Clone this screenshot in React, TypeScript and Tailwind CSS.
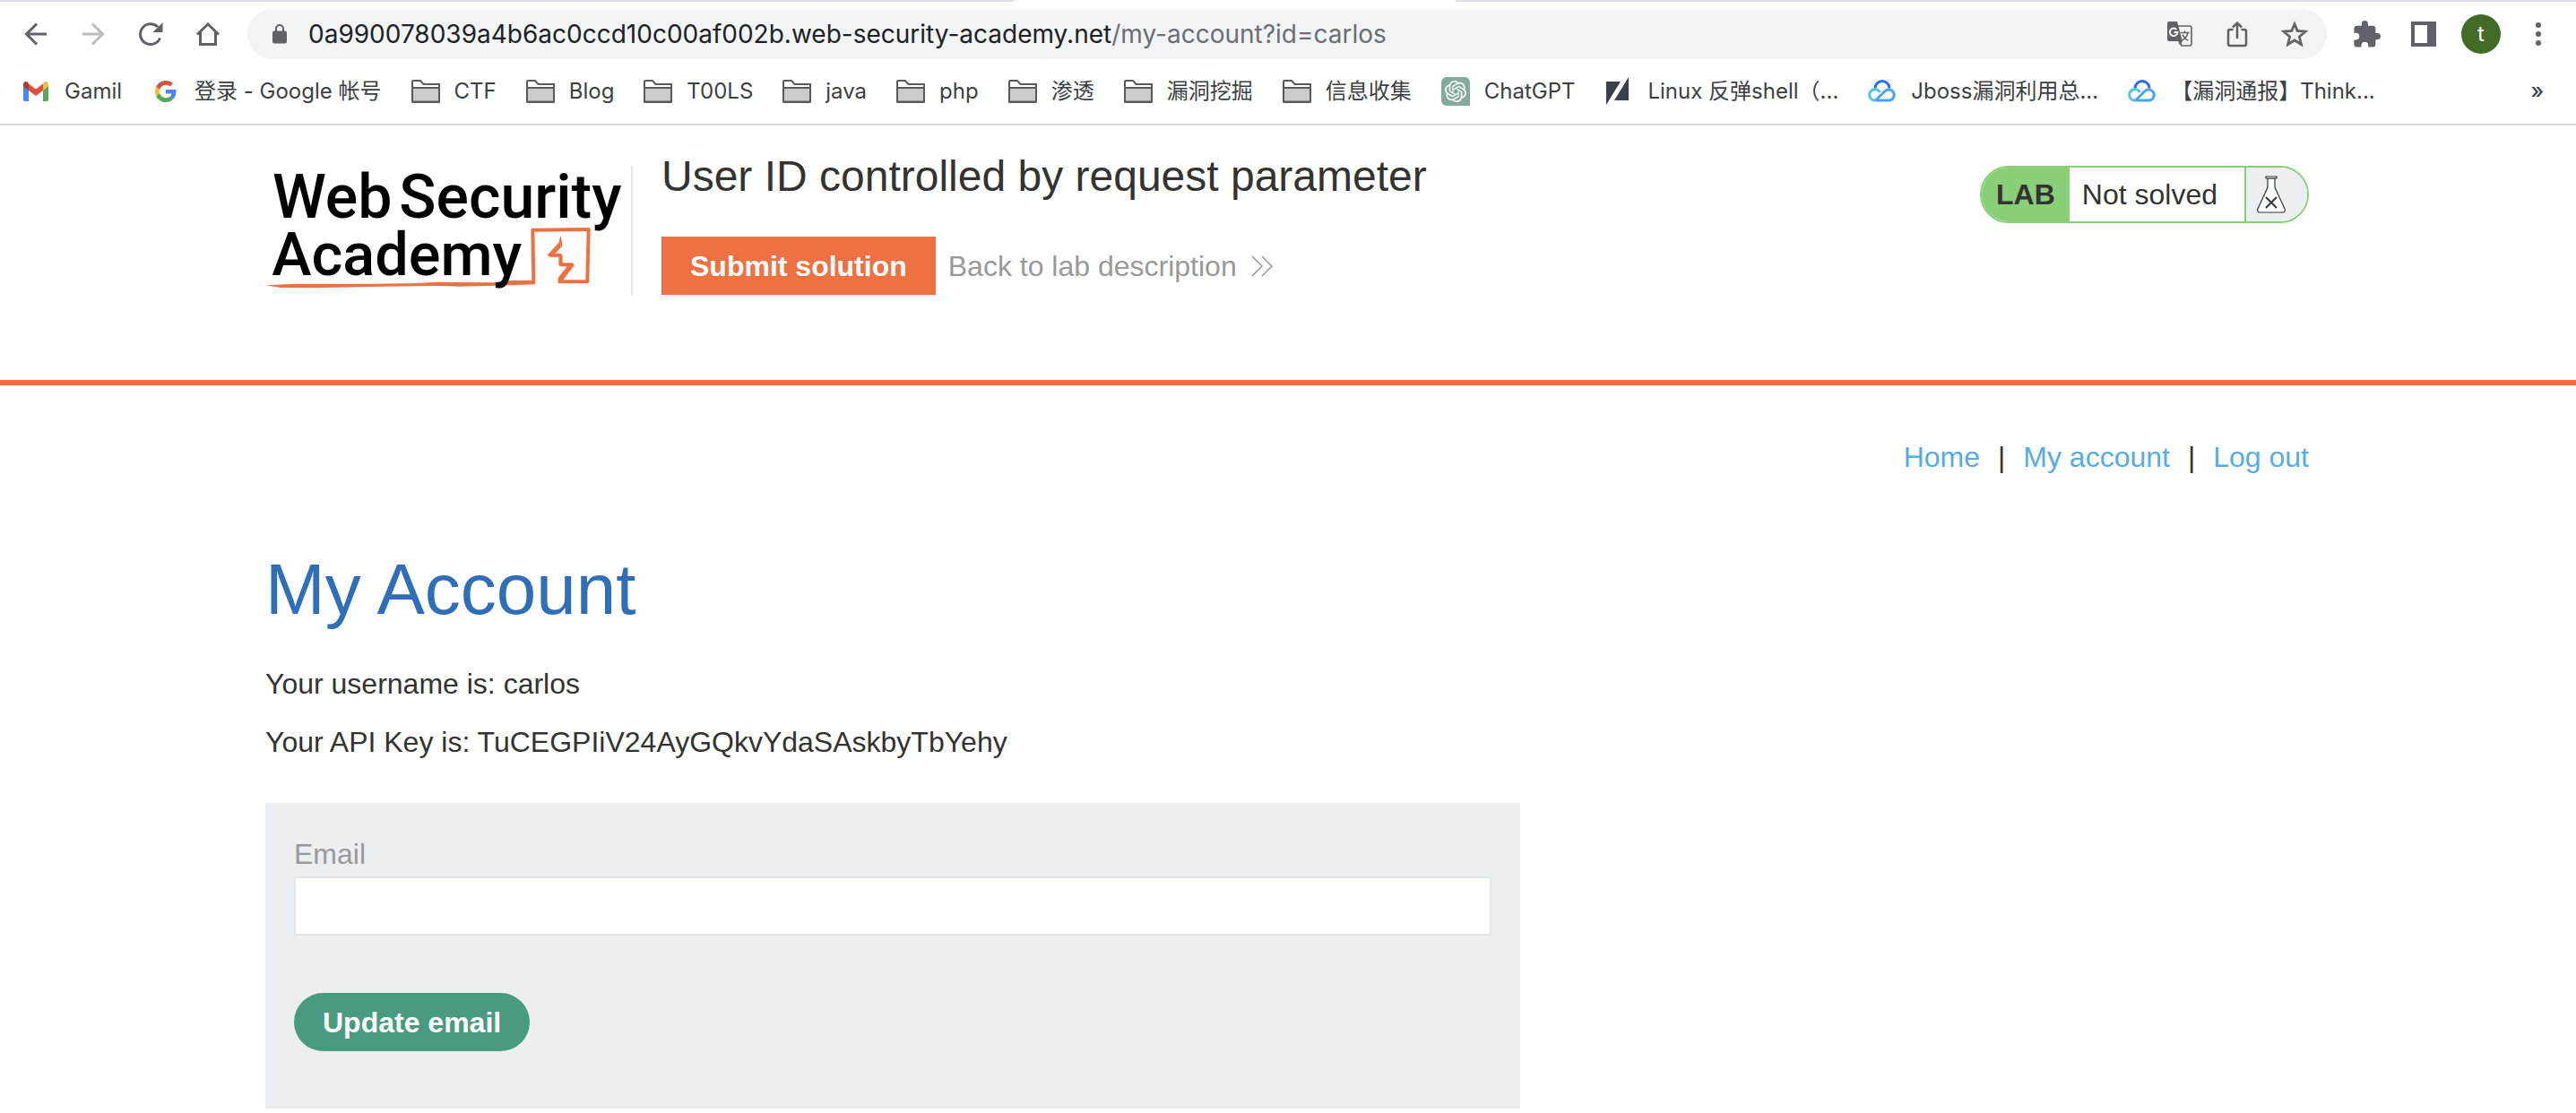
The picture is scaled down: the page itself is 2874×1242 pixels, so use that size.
import type { ReactNode } from "react";
import { SiOpenai } from "react-icons/si";

const uiFont = "font-['Inter','Noto_Sans_CJK_SC',sans-serif]";

function BackIcon() {
  return (
    <svg viewBox="0 0 26 26" className="size-[26px]" fill="none" stroke="currentColor" strokeWidth="3">
      <path d="M25 13H3M14 1.5 2.5 13 14 24.5" />
    </svg>
  );
}

function ForwardIcon() {
  return (
    <svg viewBox="0 0 26 26" className="size-[26px]" fill="none" stroke="currentColor" strokeWidth="3">
      <path d="M1 13h22M12 1.5 23.5 13 12 24.5" />
    </svg>
  );
}

function ReloadIcon() {
  return (
    <svg viewBox="0 0 28 28" className="size-7">
      <path d="M24.5 18.5A11.4 11.4 0 1 1 22 6" fill="none" stroke="currentColor" strokeWidth="3" />
      <path d="M27.500 1v11h-11z" fill="currentColor" />
    </svg>
  );
}

function HomeIcon() {
  return (
    <svg viewBox="0 0 28 28" className="size-7" fill="none" stroke="currentColor" strokeWidth="3">
      <path d="M2 14.500 14 3l12 11.500M5.500 12v13.500h17V12" />
    </svg>
  );
}

function LockIcon() {
  return (
    <svg viewBox="0 0 16 22" className="h-[22px] w-4 text-[#5f6368]">
      <rect x="0" y="7.500" width="16" height="14" rx="2" fill="currentColor" />
      <path d="M4 9V5a4 4 0 0 1 8 0v4" fill="none" stroke="currentColor" strokeWidth="2" />
    </svg>
  );
}

function TranslateIcon() {
  return (
    <svg viewBox="0 0 28 28" className="size-7">
      <path d="M11 5h14a2 2 0 0 1 2 2v18a2 2 0 0 1-2 2H16l-3-5" fill="none" stroke="#5f6368" strokeWidth="1.600" />
      <path d="M2 0h9l6 22H2a2 2 0 0 1-2-2V2a2 2 0 0 1 2-2z" fill="#5f6368" />
      <path d="M12.500 22H17l-3 4.500z" fill="#5f6368" />
      <path d="M10.300 8.800A4.300 4.300 0 1 0 11.500 12H7.500" fill="none" stroke="#fff" strokeWidth="1.900" />
      <path d="M15 12.500h9.500M19.500 10.500v2M23 12.500c-1 4-3.500 7-6.500 8.500M17 14.500c1 2.500 3.500 5 6.500 7" fill="none" stroke="#5f6368" strokeWidth="1.500" />
    </svg>
  );
}

function ShareIcon() {
  return (
    <svg viewBox="0 0 24 30" className="h-[30px] w-6" fill="none" stroke="currentColor" strokeWidth="2.500">
      <path d="M7.500 10H4a2 2 0 0 0-2 2v14a2 2 0 0 0 2 2h16a2 2 0 0 0 2-2V12a2 2 0 0 0-2-2h-3.500" />
      <path d="M12 20V3M7 7.500l5-5 5 5" />
    </svg>
  );
}

function StarIcon() {
  return (
    <svg viewBox="1 1 28 28" className="size-[30px]" fill="none" stroke="currentColor" strokeWidth="2.600">
      <path d="m15 4.500 3 7.200 8.300.7-6.300 5.400 1.900 7.900-6.900-4.200-6.900 4.200 1.900-7.900-6.300-5.400 8.300-.7z" />
    </svg>
  );
}

function PuzzleIcon() {
  return (
    <svg viewBox="1 1 22 22" className="size-[31px]" fill="currentColor">
      <path d="M20.500 11H19V7c0-1.100-.9-2-2-2h-4V3.500a2.500 2.500 0 0 0-5 0V5H4c-1.100 0-2 .9-2 2v3.800h1.500a2.700 2.700 0 0 1 0 5.400H2V20c0 1.100.9 2 2 2h3.800v-1.500a2.700 2.700 0 0 1 5.400 0V22H17c1.100 0 2-.9 2-2v-4h1.500a2.500 2.500 0 0 0 0-5z" />
    </svg>
  );
}

function SidePanelIcon() {
  return (
    <svg viewBox="0 0 28 28" className="size-7" fill="currentColor">
      <path fillRule="evenodd" d="M0 0h28v28H0zM4 4v20h14V4z" />
    </svg>
  );
}

function DotsIcon() {
  return (
    <svg viewBox="0 0 6 26" className="h-[26px] w-1.5" fill="currentColor">
      <circle cx="3" cy="3" r="3" />
      <circle cx="3" cy="13" r="3" />
      <circle cx="3" cy="23" r="3" />
    </svg>
  );
}

function GmailIcon() {
  return (
    <svg viewBox="0 0 32 32" className="size-8">
      <path d="M2 9v15.500A2 2 0 0 0 4 27h4V14z" fill="#4f86ec" />
      <path d="M30 9v15.500a2 2 0 0 1-2 2.500h-4V14z" fill="#58a55c" />
      <path d="M24 7.500V15l6-4.500V8c0-3-3.300-3.700-5-2.200z" fill="#f1bd42" />
      <path d="M8 7.500 16 13.500l8-6V15l-8 6-8-6z" fill="#d85140" />
      <path d="M2 8c0-3 3.300-3.700 5-2.200l1 1.700V15l-6-4.500z" fill="#b63a2c" />
    </svg>
  );
}

function GoogleIcon() {
  return (
    <svg viewBox="-8 -8 64 64" className="size-8">
      <path fill="#58a55c" d="M24 48c6.480 0 11.930-2.130 15.890-5.810l-7.730-6c-2.150 1.450-4.920 2.300-8.160 2.300-6.260 0-11.570-4.220-13.470-9.910H2.560v6.190C6.510 42.620 14.620 48 24 48z" />
      <path fill="#f1bd42" d="M10.530 28.590A14.500 14.500 0 0 1 9.770 24c0-1.600.27-3.140.76-4.590v-6.190H2.560A23.900 23.900 0 0 0 0 24c0 3.880.92 7.540 2.560 10.780z" />
      <path fill="#d85140" d="M24 9.500c3.540 0 6.710 1.220 9.210 3.600l6.850-6.850C35.900 2.380 30.470 0 24 0 14.620 0 6.510 5.380 2.560 13.220l7.970 6.190C12.430 13.720 17.740 9.500 24 9.500z" />
      <path fill="#5383ec" d="M46.980 24.550c0-1.570-.15-3.090-.38-4.550H24v9.020h12.940a11.100 11.100 0 0 1-4.780 7.170l7.730 6c4.510-4.180 7.090-10.360 7.090-17.640z" />
    </svg>
  );
}

function FolderIcon() {
  return (
    <svg viewBox="0 0 32 26" className="h-[26px] w-8">
      <path d="M1 24V2a1 1 0 0 1 1-1h8l3.500 4H31v19a1 1 0 0 1-1 1H2a1 1 0 0 1-1-1z" fill="#fff" stroke="#5a5a5a" strokeWidth="2" />
      <path d="M1 9h30v15.500H1z" fill="#cbcbcb" stroke="#5a5a5a" strokeWidth="2" />
    </svg>
  );
}

function ChatGptIcon() {
  return (
    <span className="flex size-8 items-center justify-center rounded-md rounded-br-none bg-[#83a99a] text-white">
      <SiOpenai className="size-6" />
    </span>
  );
}

function SlashIcon() {
  return (
    <svg viewBox="0 0 32 32" className="size-8" fill="#3b3f4d">
      <path d="M2 5h16L2 31z" />
      <path d="M27 0v26H11z" />
    </svg>
  );
}

function CloudIcon() {
  return (
    <svg viewBox="0 0 32 32" className="size-8" fill="none" strokeWidth="3">
      <path d="M8 12.500a8 8 0 0 1 16 0" stroke="#2f6bf6" />
      <path d="M13.500 17a6.200 6.200 0 1 0-5 9" stroke="#55c3dc" />
      <path d="M8.500 26 19 15.800a6 6 0 1 1 4.500 10.200H8.500" stroke="#4aa3f8" />
    </svg>
  );
}

const bookmarks: { label: string; icon: ReactNode }[] = [
  { label: "Gamil", icon: <GmailIcon /> },
  { label: "登录 - Google 帐号", icon: <GoogleIcon /> },
  { label: "CTF", icon: <FolderIcon /> },
  { label: "Blog", icon: <FolderIcon /> },
  { label: "T00LS", icon: <FolderIcon /> },
  { label: "java", icon: <FolderIcon /> },
  { label: "php", icon: <FolderIcon /> },
  { label: "渗透", icon: <FolderIcon /> },
  { label: "漏洞挖掘", icon: <FolderIcon /> },
  { label: "信息收集", icon: <FolderIcon /> },
  { label: "ChatGPT", icon: <ChatGptIcon /> },
  { label: "Linux 反弹shell（...", icon: <SlashIcon /> },
  { label: "Jboss漏洞利用总...", icon: <CloudIcon /> },
  { label: "【漏洞通报】Think...", icon: <CloudIcon /> },
];

function ToolButton({ label, className = "", children }: { label: string; className?: string; children: ReactNode }) {
  return (
    <button type="button" aria-label={label} className={`flex h-14 w-16 items-center justify-center ${className}`}>
      {children}
    </button>
  );
}

function BrowserChrome() {
  return (
    <header className={`border-b-2 border-[#d9d9dc] bg-white text-[#3c4043] ${uiFont}`}>
      <div className="flex h-0.5 justify-between">
        <span className="w-[1132px] rounded-br-sm bg-[#e0dfe5]" />
        <span className="w-[1250px] rounded-bl-sm bg-[#e0dfe5]" />
      </div>
      <div className="flex items-center py-2 pl-2 pr-2.5 text-[#5f6368]">
        <ToolButton label="Back"><BackIcon /></ToolButton>
        <ToolButton label="Forward" className="text-[#babcbe]"><ForwardIcon /></ToolButton>
        <ToolButton label="Reload"><ReloadIcon /></ToolButton>
        <ToolButton label="Home"><HomeIcon /></ToolButton>
        <div className="ml-3 flex h-14 flex-1 items-center rounded-full bg-[#f1f3f4] pl-7 pr-1">
          <LockIcon />
          <p className="ml-6 flex-1 whitespace-nowrap text-[28px] leading-10 text-[#202124]">
            0a990078039a4b6ac0ccd10c00af002b.web-security-academy.net
            <span className="text-[#6b6e72]">/my-account?id=carlos</span>
          </p>
          <ToolButton label="Translate"><TranslateIcon /></ToolButton>
          <ToolButton label="Share"><ShareIcon /></ToolButton>
          <ToolButton label="Bookmark this page"><StarIcon /></ToolButton>
        </div>
        <ToolButton label="Extensions" className="ml-3"><PuzzleIcon /></ToolButton>
        <ToolButton label="Side panel"><SidePanelIcon /></ToolButton>
        <ToolButton label="Profile">
          <span className="flex size-11 items-center justify-center rounded-full bg-[#426b28] text-2xl text-white">t</span>
        </ToolButton>
        <ToolButton label="Menu"><DotsIcon /></ToolButton>
      </div>
      <nav aria-label="Bookmarks" className="mb-2 flex h-14 items-center gap-[33px] pl-6 pr-9 text-2xl">
        {bookmarks.map((b) => (
          <a key={b.label} href="#" className="flex items-center gap-4 whitespace-nowrap">
            {b.icon}
            {b.label}
          </a>
        ))}
        <button type="button" aria-label="More bookmarks" className="ml-auto font-medium">»</button>
      </nav>
    </header>
  );
}

function AcademyLogo() {
  return (
    <svg viewBox="48 75 1224 432" className="h-36 w-[408px] overflow-visible" role="img" aria-label="Web Security Academy">
      <path
        d="M50 475 150 470 400 470 560 468 620 464 820 466 870 459 950 458V472L820 476 700 479 610 477 400 480 220 484 100 483z"
        fill="#ee7144"
      />
      <path
        d="M946 464 943 290 1130 288 1126 462 1034 463"
        fill="none"
        stroke="#ee7144"
        strokeWidth="12"
        strokeLinejoin="round"
        strokeLinecap="round"
      />
      <path
        d="M1036 309 1041 330V345L1018 368H1037L1043 374V400L1075 400 1083 407 1044 458 1040 468H1028V450L1058 412H1034L1030 406V380H1000L992 374 1030 332z"
        fill="#ee7144"
      />
      <g fill="#000" fontFamily="Roboto, sans-serif" fontWeight="500">
        <text x="72" y="248" fontSize="204">Web</text>
        <text x="496" y="248" fontSize="204">Security</text>
        <text x="70" y="442" fontSize="200">Academy</text>
      </g>
    </svg>
  );
}

function FlaskIcon() {
  return (
    <svg viewBox="0 0 32 42" className="h-[42px] w-8" fill="#fff" stroke="#333332" strokeWidth="1.200">
      <path d="M12 3v10L1 37q-1 4 2 4h26q3 0 2-4L20 13V3z" />
      <path d="M10 1h12v2H10z" />
      <path d="m10 24 12 12M22 24 10 36" strokeWidth="2" />
    </svg>
  );
}

function LabHeader() {
  return (
    <section className="border-b-[6px] border-[#ee7144] pr-0.5">
      <div className="mx-auto flex max-w-[2280px] items-start pt-[29px] pb-[95px]">
        <a href="#" className="mt-4 shrink-0 border-r-2 border-[#e5e5e5]"><AcademyLogo /></a>
        <div className="ml-8 flex-1">
          <h2 className="text-5xl leading-14">User ID controlled by request parameter</h2>
          <div className="mt-[39px] flex items-center gap-3.5">
            <button type="button" className="h-[65px] bg-[#ee7144] px-8 font-bold text-white">Submit solution</button>
            <a href="#" className="flex items-center gap-4 text-[#999999]">
              Back to lab description
              <svg viewBox="0 0 24 24" className="size-6" fill="none" stroke="currentColor" strokeWidth="1.500">
                <path d="M1 1l11 11L1 23M12 1l11 11-11 11" />
              </svg>
            </a>
          </div>
        </div>
        <div className="mt-4 flex h-16 overflow-hidden rounded-full border-2 border-[#89cf78]">
          <span className="flex items-center bg-[#89cf78] px-4 font-bold">LAB</span>
          <span className="flex items-center bg-white pl-3.5 pr-[30px]">Not solved</span>
          <span className="flex items-center border-l-2 border-[#89cf78] bg-[#ebeff2] pl-3 pr-6"><FlaskIcon /></span>
        </div>
      </div>
    </section>
  );
}

export default function App() {
  return (
    <div className="min-h-screen bg-white">
      <BrowserChrome />
      <div className="font-['Liberation_Sans',Arial,sans-serif] text-[32px] leading-10 text-[#333332]">
        <LabHeader />
        <main className="pr-0.5">
          <div className="mx-auto max-w-[2280px] pt-15">
            <nav aria-label="Account" className="flex justify-end gap-5">
              <a href="#" className="text-[#58ace0]">Home</a>
              <span>|</span>
              <a href="#" className="text-[#58ace0]">My account</a>
              <span>|</span>
              <a href="#" className="text-[#58ace0]">Log out</a>
            </nav>
            <h1 className="mt-20 text-[80px] leading-24 text-[#306fb7]">My Account</h1>
            <div className="mt-[37px] flex flex-col gap-[25px]">
              <p>Your username is: carlos</p>
              <p>Your API Key is: TuCEGPIiV24AyGQkvYdaSAskbyTbYehy</p>
            </div>
            <form className="mt-12 max-w-[1400px] bg-[#ebeff2] px-8 pt-[37px] pb-16">
              <label htmlFor="email" className="block text-[#999999]">Email</label>
              <input id="email" type="email" className="mt-[5px] block h-[66px] w-full border-2 border-[#e5e5e5] bg-white px-4" />
              <button type="button" className="mt-16 block h-[65px] rounded-full bg-[#489a80] px-8 font-bold text-white">Update email</button>
            </form>
          </div>
        </main>
      </div>
    </div>
  );
}
